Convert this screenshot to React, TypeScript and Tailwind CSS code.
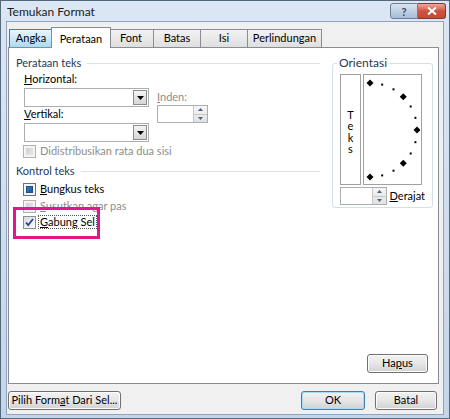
import React from 'react';

const FONT = { fontFamily: 'Lato, "Liberation Sans", sans-serif' };

// little black triangle used in the combo box button
const DropArrow = () => (
  <svg width="7" height="4" viewBox="0 0 7 4">
    <path d="M0 0h7L3.5 4z" fill="#000" />
  </svg>
);

const ComboBox = () => (
  <div className="flex h-[19px] w-[125px] border border-[#abadb3] bg-white">
    <div className="flex-1" />
    <div className="m-px flex w-[14px] items-center justify-center border border-[#8c8c8c] bg-gradient-to-b from-[#f4f4f4] to-[#d6d6d6]">
      <DropArrow />
    </div>
  </div>
);

const Spinner = ({ width }: { width: string }) => (
  <div className={`flex h-[18px] ${width} border border-[#abadb3] bg-white`}>
    <div className="flex-1" />
    <div className="flex w-[14px] flex-col border-l border-[#c8c8c8] bg-gradient-to-b from-[#f5f5f5] to-[#e2e2e2]">
      <div className="flex flex-1 items-center justify-center border-b border-[#c8c8c8]">
        <svg width="5" height="3" viewBox="0 0 5 3"><path d="M0 3h5L2.5 0z" fill="#4d6185" /></svg>
      </div>
      <div className="flex flex-1 items-center justify-center">
        <svg width="5" height="3" viewBox="0 0 5 3"><path d="M0 0h5L2.5 3z" fill="#4d6185" /></svg>
      </div>
    </div>
  </div>
);

type BoxState = 'disabled' | 'mixed' | 'checked';

const CheckBox = ({ state }: { state: BoxState }) => {
  if (state === 'disabled') {
    return (
      <div className="h-[13px] w-[13px] shrink-0 border border-[#b1b1b1] bg-[#f4f4f4] p-[2px]">
        <div className="h-full w-full bg-gradient-to-br from-[#cfcfcf] to-[#e8e8e8]" />
      </div>
    );
  }
  if (state === 'mixed') {
    return (
      <div className="h-[13px] w-[13px] shrink-0 border border-[#707070] bg-[#f4f4f4] p-[2px]">
        <div className="h-full w-full border border-[#1d4f84] bg-gradient-to-br from-[#2f7fc7] to-[#1b5a9a]" />
      </div>
    );
  }
  return (
    <div className="flex h-[13px] w-[13px] shrink-0 items-center justify-center border border-[#8e8f8f] bg-gradient-to-br from-[#dcdcdc] to-[#fbfbfb]">
      <svg width="9" height="9" viewBox="0 0 9 9">
        <path d="M1 4.5l2.2 2.6L8 1" fill="none" stroke="#21409a" strokeWidth="1.7" />
      </svg>
    </div>
  );
};

const GroupHeader = ({ label }: { label: string }) => (
  <div className="flex h-[14px] items-center gap-[6px]">
    <span className="text-[#1e395b]">{label}</span>
    <div className="h-px flex-1 bg-[#dde3ea]" />
  </div>
);

// orientation dial: half circle of marks
const Dial = () => {
  const cx = 6;
  const cy = 55;
  const r = 47;
  const marks = [90, 75, 60, 45, 30, 15, 0, -15, -30, -45, -60, -75, -90];
  return (
    <svg width="56" height="108" viewBox="0 0 56 108">
      {marks.map((a) => {
        const rad = (a * Math.PI) / 180;
        const x = cx + r * Math.cos(rad);
        const y = cy - r * Math.sin(rad);
        const big = a % 45 === 0;
        return big ? (
          <path key={a} d={`M${x} ${y - 3.5}L${x + 3.5} ${y}L${x} ${y + 3.5}L${x - 3.5} ${y}z`} fill="#000" />
        ) : (
          <rect key={a} x={x - 1} y={y - 1} width="2" height="2" fill="#000" />
        );
      })}
    </svg>
  );
};

const Button = ({ children, primary, width }: { children: React.ReactNode; primary?: boolean; width: string }) => (
  <div
    className={`flex h-[19px] ${width} items-center justify-center rounded-[3px] border ${
      primary ? 'border-[#3c7fb1] shadow-[inset_0_0_0_1px_#a6dcf5]' : 'border-[#707070] shadow-[inset_0_0_0_1px_#fcfcfc]'
    } bg-gradient-to-b from-[#f2f2f2] via-[#e6e6e6] to-[#d2d2d2] text-black`}
  >
    {children}
  </div>
);

type Tab = { label: string; w: string; active?: boolean; hover?: boolean };

const TABS: Tab[] = [
  { label: 'Angka', w: 'w-[44px]', hover: true },
  { label: 'Perataan', w: 'w-[60px]', active: true },
  { label: 'Font', w: 'w-[46px]' },
  { label: 'Batas', w: 'w-[48px]' },
  { label: 'Isi', w: 'w-[48px]' },
  { label: 'Perlindungan', w: 'w-[75px]' },
];

export default function App() {
  return (
    <div
      className="flex h-[419px] w-[450px] flex-col whitespace-nowrap border border-[#56687c] bg-gradient-to-b from-[#dbe7f5] to-[#c4d5ea] text-[11px] text-black"
      style={FONT}
    >
      {/* caption bar */}
      <div className="flex h-[20px] items-start">
        <span className="ml-[6px] mt-[3px] text-[12px] leading-[16px] text-[#1b1b1b]">Temukan Format</span>
        <div className="ml-auto mr-[3px] mt-[2px] flex">
          <div className="flex h-[16px] w-[28px] items-center justify-center rounded-l-[3px] border border-[#6d7f95] bg-gradient-to-b from-[#d9e4f1] to-[#a8bcd6] text-[11px] font-bold leading-none text-[#39495d]">
            ?
          </div>
          <div className="flex h-[16px] w-[28px] items-center justify-center rounded-r-[3px] border border-l-0 border-[#7d3a33] bg-gradient-to-b from-[#e9a99c] via-[#d0533f] to-[#c44a38]">
            <svg width="10" height="8" viewBox="0 0 10 8">
              <path d="M1 0.5l8 7M9 0.5l-8 7" stroke="#fff" strokeWidth="2" />
            </svg>
          </div>
        </div>
      </div>

      {/* client area */}
      <div className="mx-[5px] mb-[3px] flex flex-1 flex-col border border-[#8fa3bb] bg-[#f0f0f0]">
        <div className="ml-[3px] mt-[6px] flex h-[19px] items-end">
          {TABS.map((t) =>
            t.active ? (
              <div
                key={t.label}
                className={`relative z-10 -mx-[2px] -mb-px flex h-[21px] ${t.w} items-start justify-center border border-b-0 border-[#898c95] bg-white pt-[3px]`}
              >
                {t.label}
              </div>
            ) : (
              <div
                key={t.label}
                className={`-ml-px flex h-[18px] ${t.w} items-center justify-center border border-b-0 ${
                  t.hover
                    ? 'border-[#3c7fb1] bg-gradient-to-b from-[#eaf6fd] to-[#a9daf5]'
                    : 'border-[#898c95] bg-gradient-to-b from-[#f2f2f2] to-[#dfdfdf]'
                }`}
              >
                {t.label}
              </div>
            )
          )}
        </div>

        {/* tab page */}
        <div className="ml-px mr-[4px] flex h-[337px] flex-col border border-[#898c95] bg-white">
          <div className="flex">
            <div className="ml-[7px] mt-[8px] flex w-[304px] flex-col">
              <GroupHeader label="Perataan teks" />
              <div className="ml-[8px] flex">
                <div className="flex flex-col">
                  <div className="mt-[2px] h-[14px] leading-[14px]">
                    <u>H</u>orizontal:
                  </div>
                  <div className="mt-[2px]">
                    <ComboBox />
                  </div>
                  <div className="h-[14px] leading-[14px]">
                    <u>V</u>ertikal:
                  </div>
                  <div className="mt-[2px]">
                    <ComboBox />
                  </div>
                </div>
                <div className="ml-[8px] mt-[20px] flex flex-col">
                  <div className="h-[14px] leading-[14px] text-[#8d8d8d]">
                    <u>I</u>nden:
                  </div>
                  <div className="mt-[1px]">
                    <Spinner width="w-[51px]" />
                  </div>
                </div>
              </div>
              <div className="ml-[7px] mt-[2px] flex h-[14px] items-center gap-[4px] text-[#8d8d8d]">
                <CheckBox state="disabled" />
                <span>Didistribusikan rata dua sisi</span>
              </div>

              <div className="mt-[6px]">
                <GroupHeader label="Kontrol teks" />
              </div>
              <div className="ml-[7px] mt-[4px] flex h-[14px] items-center gap-[4px]">
                <CheckBox state="mixed" />
                <span>
                  <u>B</u>ungkus teks
                </span>
              </div>
              <div className="ml-[7px] mt-[3px] flex h-[14px] items-center gap-[4px] text-[#8d8d8d]">
                <CheckBox state="disabled" />
                <span>
                  <u>S</u>usutkan agar pas
                </span>
              </div>
              <div className="relative ml-[7px] mt-[2px] flex h-[14px] items-center gap-[2px]">
                <CheckBox state="checked" />
                <span className="border border-dotted border-[#555] px-px leading-[12px]">
                  <u>G</u>abung Sel
                </span>
                {/* highlight frame around the merge option */}
                <div className="pointer-events-none absolute -left-[10px] -top-[8px] h-[32px] w-[87px] border-[3px] border-[#e2178c]" />
              </div>
            </div>

            {/* orientation group */}
            <div className="relative ml-[12px] mt-[15px] flex h-[145px] w-[101px] flex-col rounded-[3px] border border-[#d5dfe5] px-[7px] pt-[10px]">
              <span className="absolute -top-[8px] left-[4px] bg-white px-[2px] text-[12px] leading-[14px] text-[#1e395b]">
                Orientasi
              </span>
              <div className="flex gap-[2px]">
                <div className="flex h-[111px] w-[21px] flex-col items-center justify-center border border-[#a0a0a0] pt-[4px] text-[11px] leading-[11.5px]">
                  <span>T</span>
                  <span>e</span>
                  <span>k</span>
                  <span>s</span>
                </div>
                <div className="h-[111px] w-[59px] border border-[#a0a0a0]">
                  <Dial />
                </div>
              </div>
              <div className="mt-[2px] flex items-center gap-[3px]">
                <Spinner width="w-[51px]" />
                <span>
                  <u>D</u>erajat
                </span>
              </div>
            </div>
          </div>

          <div className="mb-[10px] mr-[10px] mt-auto flex justify-end">
            <Button width="w-[61px]">
              <span>
                Ha<u>p</u>us
              </span>
            </Button>
          </div>
        </div>

        {/* dialog buttons */}
        <div className="ml-px mr-[6px] mt-[7px] flex">
          <Button width="w-[113px]">
            <span>
              Pilih Form<u>a</u>t Dari Sel...
            </span>
          </Button>
          <div className="ml-auto flex gap-[10px]">
            <Button width="w-[64px]" primary>
              OK
            </Button>
            <Button width="w-[62px]">Batal</Button>
          </div>
        </div>
      </div>
    </div>
  );
}
